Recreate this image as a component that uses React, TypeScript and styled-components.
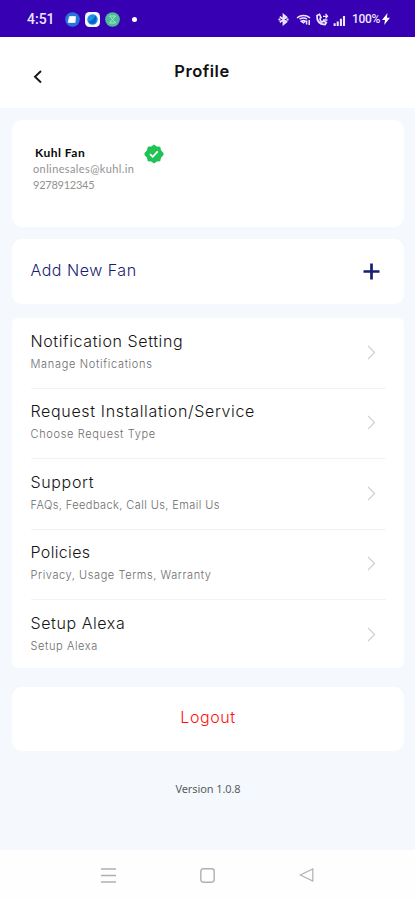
import React from 'react';
import styled, { createGlobalStyle } from 'styled-components';

const GlobalStyle = createGlobalStyle`
  * { box-sizing: border-box; }
  body { margin: 0; background: #f5f9fe; font-family: Inter, "Liberation Sans", sans-serif; }
  svg { display: block; flex: none; }
`;

const Screen = styled.div`
  width: 415px;
  height: 900px;
  display: flex;
  flex-direction: column;
  background: #f5f9fe;
  overflow: hidden;
`;

const StatusBar = styled.div`
  height: 37px;
  flex: none;
  display: flex;
  align-items: center;
  padding: 1px 25px 0 27px;
  background: #3700b3;
  color: #ece6ff;
`;

const Clock = styled.span`
  width: 38px;
  font: 500 14px/16px Roboto, sans-serif;
`;

const AppBadges = styled.div`
  display: flex;
  gap: 5px;
`;

const Dot = styled.span`
  width: 5px;
  height: 5px;
  margin-left: 12px;
  border-radius: 50%;
  background: #fff;
`;

const SystemIcons = styled.div`
  display: flex;
  align-items: center;
  margin-left: auto;
`;

const StatusIcon = styled.svg<{ $ml?: number; $mt?: number }>`
  margin-left: ${(p) => p.$ml ?? 0}px;
  margin-top: ${(p) => p.$mt ?? 0}px;
`;

const Battery = styled.span`
  width: 30px;
  margin-left: 6px;
  font: 500 12px/16px Roboto, sans-serif;
  letter-spacing: -0.3px;
  white-space: nowrap;
`;

const Header = styled.header`
  height: 71px;
  flex: none;
  display: grid;
  grid-template-columns: 110px 1fr 121px;
  background: #fff;
`;

const BackButton = styled.button`
  border: 0;
  background: none;
  padding: 32px 0 0 33px;
  display: flex;
  align-items: flex-start;
`;

const Title = styled.h1`
  margin: 23px 0 0;
  text-align: center;
  font-size: 16.5px;
  line-height: 22px;
  font-weight: 600;
  letter-spacing: 0.5px;
  color: #111;
`;

const Content = styled.main`
  flex: 1;
  display: flex;
  flex-direction: column;
  padding: 12px 11px 0 12px;
`;

const Card = styled.section<{ $h: number; $gap: number; $r?: number }>`
  height: ${(p) => p.$h}px;
  margin-bottom: ${(p) => p.$gap}px;
  border-radius: ${(p) => p.$r ?? 10}px;
  flex: none;
  background: #fff;
`;

const ProfileCard = styled(Card)`
  display: flex;
  align-items: flex-start;
  padding: 25px 0 0 21px;
`;

const Identity = styled.div`
  width: 111px;
  font-family: Lato, sans-serif;
  color: #929292;
`;

const Name = styled.div`
  padding-left: 2px;
  font: 700 12px/16px Lato, sans-serif;
  letter-spacing: 0.5px;
  color: #080808;
`;

const Detail = styled.div<{ $ls: number }>`
  font-size: 11px;
  line-height: 16px;
  letter-spacing: ${(p) => p.$ls}px;
`;

const VerifiedBadge = styled.svg`
  margin-top: -1px;
`;

const ActionCard = styled(Card)`
  display: flex;
  align-items: center;
  justify-content: space-between;
  padding: 0 24px 3px 18.5px;
`;

const PlusIcon = styled.svg`
  margin-top: 3px;
`;

const Label = styled.div<{ $color?: string; $ls?: number }>`
  font-size: 16px;
  line-height: 22px;
  font-weight: 300;
  letter-spacing: ${(p) => p.$ls ?? 0}px;
  color: ${(p) => p.$color ?? '#151515'};
  white-space: nowrap;
`;

const Sub = styled.div<{ $ls: number }>`
  margin-top: 4px;
  font-size: 11px;
  line-height: 16px;
  font-weight: 300;
  letter-spacing: ${(p) => p.$ls}px;
  color: #6c6c6c;
  white-space: nowrap;
`;

const MenuCard = styled(Card)`
  padding: 0 18px 0 18.5px;
`;

const MenuRow = styled.div`
  height: 70.6px;
  padding: 11.5px 10px 0 0;
  display: flex;
  justify-content: space-between;
  border-bottom: 1.5px solid #f3f3f3;
  &:last-child { border-bottom: 0; }
`;

const Arrow = styled.div`
  padding-top: 15px;
`;

const LogoutCard = styled(Card)`
  display: flex;
  justify-content: center;
  padding-top: 19px;
`;

const Version = styled.div`
  text-align: center;
  font: 400 11px/16px "Noto Sans", sans-serif;
  letter-spacing: -0.1px;
  color: #5c5c5c;
`;

const NavBar = styled.nav`
  height: 50px;
  flex: none;
  display: flex;
  align-items: center;
  justify-content: space-between;
  padding: 0 101px;
  background: #fefefe;
`;

const items = [
  { title: 'Notification Setting', ls: 0.61, sub: 'Manage Notifications', subLs: 0.68 },
  { title: 'Request Installation/Service', ls: 0.66, sub: 'Choose Request Type', subLs: 0.66 },
  { title: 'Support', ls: 0.65, sub: 'FAQs, Feedback, Call Us, Email Us', subLs: 0.42 },
  { title: 'Policies', ls: 0.35, sub: 'Privacy, Usage Terms, Warranty', subLs: 0.58 },
  { title: 'Setup Alexa', ls: 0.58, sub: 'Setup Alexa', subLs: 0.6 },
];

export default function App() {
  return (
    <Screen>
      <GlobalStyle />
      <StatusBar>
        <Clock>4:51</Clock>
        <AppBadges>
          <svg width="15" height="15" viewBox="0 0 15 15">
            <circle cx="7.5" cy="7.5" r="7.3" fill="#2874dc" />
            <path d="M4.5 4.5h6l-.5 6H3.2z" fill="#fff" stroke="#d9ecff" strokeLinejoin="round" />
          </svg>
          <svg width="15" height="15" viewBox="0 0 15 15">
            <rect width="15" height="15" rx="4.5" fill="#f4f7ff" />
            <circle cx="7.5" cy="7.5" r="5.2" fill="#1593e5" />
            <path d="M3.5 9.5Q8 9 10.5 3.5Q12.5 7 10 11Q6 13.5 3.5 9.5z" fill="#075fc9" />
          </svg>
          <svg width="15" height="15" viewBox="0 0 15 15">
            <circle cx="7.5" cy="7.5" r="7.3" fill="#4dbb9b" />
            <path d="M4.5 4l6 7M10.5 4l-6 7M4.5 4h6M4.5 11h6" stroke="#a5eac0" fill="none" />
          </svg>
        </AppBadges>
        <Dot />
        <SystemIcons>
          <StatusIcon width="11" height="13" viewBox="0 0 11 13" fill="none" stroke="currentColor" strokeWidth="1.8">
            <path d="M1.8 3.6l6.6 5.2-2.9 2.4V1.8l2.9 2.4-6.6 5.2M.5 6.5h2M8.5 6.5h2" />
          </StatusIcon>
          <StatusIcon $ml={7} width="15" height="13" viewBox="0 0 15 13" fill="none" stroke="currentColor" strokeWidth="1.5">
            <path d="M1 4.8Q7.5.2 14 4.8M3.5 6.2Q7.5 3.8 11 6.2M5.3 8.2Q7.5 6.8 9.2 8.2L7.5 9.8z" />
            <path d="M10.6 11.5V7.5M13.2 7v5" />
          </StatusIcon>
          <StatusIcon $ml={4} width="14" height="13" viewBox="0 0 14 13" fill="none" stroke="currentColor" strokeWidth="1.7">
            <path d="M2 2.5Q1.5 11 10 11.7l1.3-2.2-2.8-1.5-1.5 1Q5 8 5 5.5l1-1L4.5 1.3z" />
            <path d="M8 3.3h4.5M10.5 1l2 2.3-2 2.2M12.5 7H8" strokeWidth="1.3" />
          </StatusIcon>
          <StatusIcon $ml={4} $mt={3} width="13" height="10" viewBox="0 0 13 11" fill="currentColor">
            <path d="M0 8h2.3v3H0zM3.4 6h2.3v5H3.4zM6.9 3h2.3v8H6.9zM10.3 0h2.3v11h-2.3z" />
          </StatusIcon>
          <Battery>100%</Battery>
          <StatusIcon width="8" height="12" viewBox="0 0 8 12" fill="#fff">
            <path d="M5.5 0L0 7h3L2.2 12 8 4.8H4.9z" />
          </StatusIcon>
        </SystemIcons>
      </StatusBar>

      <Header>
        <BackButton aria-label="Back">
          <svg width="9" height="15" viewBox="0 0 9 15" fill="none" stroke="#171717" strokeWidth="1.9">
            <path d="M8 2L2 7.8 8 13.5" />
          </svg>
        </BackButton>
        <Title>Profile</Title>
      </Header>

      <Content>
        <ProfileCard $h={107} $gap={12}>
          <Identity>
            <Name>Kuhl Fan</Name>
            <Detail $ls={0.38}>onlinesales@kuhl.in</Detail>
            <Detail $ls={-0.25}>9278912345</Detail>
          </Identity>
          <VerifiedBadge width="20" height="20" viewBox="0 0 20 20">
            <path
              d="M10 .5l2.8 2 3.4.3.8 3.4 2.5 2.8v2l-2.5 2.8-.8 3.4-3.4.3-2.8 2-2.8-2-3.4-.3-.8-3.4L.5 11V9L3 6.2l.8-3.4 3.4-.3z"
              fill="#20c254"
            />
            <path d="M6 10.2l2.7 2.6 5-5.4" fill="none" stroke="#fff" strokeWidth="1.7" />
          </VerifiedBadge>
        </ProfileCard>

        <ActionCard $h={65} $gap={14}>
          <Label $color="#1b1b75" $ls={0.52}>Add New Fan</Label>
          <PlusIcon width="17" height="17" viewBox="0 0 17 17">
            <path d="M8.5 .5v16M.5 8.5h16" stroke="#14206e" strokeWidth="2.7" />
          </PlusIcon>
        </ActionCard>

        <MenuCard $h={350} $gap={19} $r={6}>
          {items.map((item) => (
            <MenuRow key={item.title}>
              <div>
                <Label $ls={item.ls}>{item.title}</Label>
                <Sub $ls={item.subLs}>{item.sub}</Sub>
              </div>
              <Arrow>
                <svg width="9" height="15" viewBox="0 0 9 15" fill="none" stroke="#cecece" strokeWidth="1.2">
                  <path d="M1 .8l6.5 6.7L1 14.2" />
                </svg>
              </Arrow>
            </MenuRow>
          ))}
        </MenuCard>

        <LogoutCard $h={64} $gap={30}>
          <Label $color="#ff1010" $ls={0.6}>Logout</Label>
        </LogoutCard>
        <Version>Version 1.0.8</Version>
      </Content>

      <NavBar>
        <svg width="15" height="17" viewBox="0 0 15 17" stroke="#b0b0b0" strokeWidth="1.4">
          <path d="M0 2h15M0 8.5h15M0 15h15" />
        </svg>
        <svg width="15" height="15" viewBox="0 0 15 15" fill="none" stroke="#b0b0b0" strokeWidth="1.4">
          <rect x=".8" y=".8" width="13.4" height="13.4" rx="2.6" />
        </svg>
        <svg width="15" height="14" viewBox="0 0 15 14" fill="none" stroke="#b0b0b0" strokeWidth="1.2">
          <path d="M13.8 1v12L1.2 7z" />
        </svg>
      </NavBar>
    </Screen>
  );
}
